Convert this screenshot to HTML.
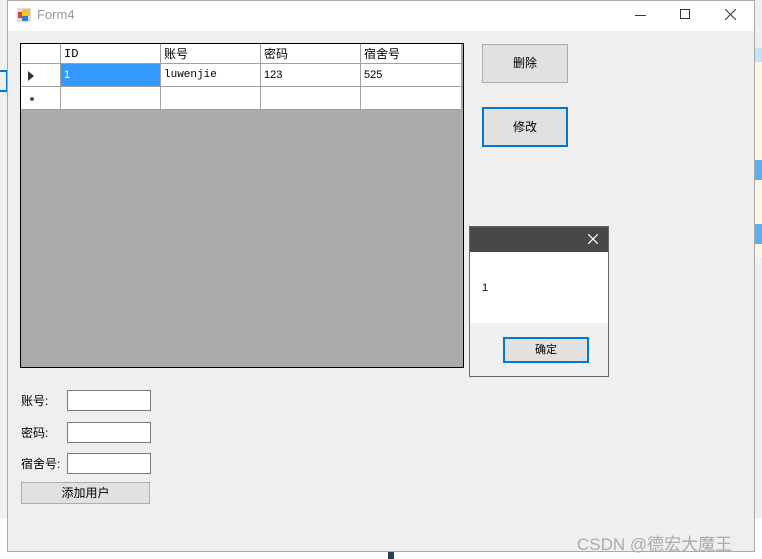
<!DOCTYPE html>
<html><head><meta charset="utf-8"><style>
*{margin:0;padding:0;box-sizing:border-box}
body{width:762px;height:559px;position:relative;overflow:hidden;background:#f0f0f0;font-family:"Liberation Sans","Noto Sans CJK SC",sans-serif;font-size:12px;color:#000}
.a{position:absolute}
.win{left:7px;top:0;width:748px;height:552px;background:#efefef;border:1px solid #aaa}
.title{left:8px;top:1px;width:746px;height:30px;background:#fff}
.cell{position:absolute;border-right:1px solid #a0a0a0;border-bottom:1px solid #a0a0a0;background:#fff;padding-left:3px;line-height:20px;font-size:12px}
.btn{position:absolute;background:#e1e1e1;border:1px solid #adadad;text-align:center;font-size:12px}
.tb{position:absolute;background:#fff;border:1px solid #7a7a7a;width:84px;height:21px;left:67px}
.lbl{position:absolute;left:21px;font-size:12px}
</style></head><body>
<div class="a" style="left:0;top:0;width:8px;height:559px;background:#f0f0f0"></div>
<div class="a" style="left:0;top:70px;width:8px;height:22px;border:2px solid #0078d7;border-left:none"></div>
<div class="a" style="left:755px;top:48px;width:7px;height:14px;background:#bfe3f8"></div>
<div class="a" style="left:755px;top:62px;width:7px;height:195px;background:#fdf8e6"></div>
<div class="a" style="left:755px;top:160px;width:7px;height:20px;background:#5ab0ef"></div>
<div class="a" style="left:755px;top:224px;width:7px;height:20px;background:#5ab0ef"></div>
<div class="a" style="left:0;top:518px;width:762px;height:41px;background:#fff"></div>
<div class="a" style="left:388px;top:550px;width:6px;height:9px;background:#2a3a5a"></div>
<div class="a win"></div>
<div class="a title"></div>
<svg class="a" style="left:17px;top:8px" width="14" height="14"><rect x="0" y="0" width="14" height="14" fill="#ddd"/><rect x="5" y="1" width="8" height="7" fill="#f4c430"/><rect x="1" y="4" width="4" height="6" fill="#d42"/><rect x="5" y="8" width="6" height="5" fill="#3a78d0"/></svg>
<div class="a" style="left:37px;top:7px;color:#999;font-size:13px">Form4</div>
<div class="a" style="left:635px;top:15px;width:11px;height:1px;background:#333"></div>
<div class="a" style="left:680px;top:9px;width:10px;height:10px;border:1px solid #333"></div>
<svg class="a" style="left:725px;top:9px" width="11" height="11"><path d="M0 0L11 11M11 0L0 11" stroke="#333" stroke-width="1"/></svg>
<!-- grid -->
<div class="a" style="left:20px;top:43px;width:444px;height:325px;background:#ababab;border:1px solid #000"></div>
<div class="cell" style="left:21px;top:44px;width:40px;height:20px"></div>
<div class="cell" style="left:61px;top:44px;width:100px;height:20px;font-family:'Liberation Mono',monospace">ID</div>
<div class="cell" style="left:161px;top:44px;width:100px;height:20px">账号</div>
<div class="cell" style="left:261px;top:44px;width:100px;height:20px">密码</div>
<div class="cell" style="left:361px;top:44px;width:101px;height:20px">宿舍号</div>
<div class="cell" style="left:21px;top:64px;width:40px;height:23px"></div>
<svg class="a" style="left:28px;top:71px" width="6" height="10"><path d="M0 0L6 5L0 10Z" fill="#333"/></svg>
<div class="cell" style="left:61px;top:64px;width:100px;height:23px;background:#3399ff;color:#fff;line-height:22px;font-size:11px">1</div>
<div class="cell" style="left:161px;top:64px;width:100px;height:23px;line-height:22px;font-family:'Liberation Mono',monospace;font-size:11px">luwenjie</div>
<div class="cell" style="left:261px;top:64px;width:100px;height:23px;line-height:22px;font-size:11px">123</div>
<div class="cell" style="left:361px;top:64px;width:101px;height:23px;line-height:22px;font-size:11px">525</div>
<div class="cell" style="left:21px;top:87px;width:40px;height:23px"></div>
<div class="a" style="left:30px;top:97px;width:4px;height:4px;background:#555;border-radius:2px"></div>
<div class="cell" style="left:61px;top:87px;width:100px;height:23px"></div>
<div class="cell" style="left:161px;top:87px;width:100px;height:23px"></div>
<div class="cell" style="left:261px;top:87px;width:100px;height:23px"></div>
<div class="cell" style="left:361px;top:87px;width:101px;height:23px"></div>
<!-- buttons -->
<div class="btn" style="left:482px;top:44px;width:86px;height:39px;line-height:37px">删除</div>
<div class="btn" style="left:482px;top:107px;width:86px;height:40px;line-height:36px;border:2px solid #0078d7">修改</div>
<!-- dialog -->
<div class="a" style="left:469px;top:226px;width:140px;height:151px;background:#f0f0f0;border:1px solid #666"></div>
<div class="a" style="left:470px;top:227px;width:138px;height:25px;background:#4a4846"></div>
<svg class="a" style="left:588px;top:234px" width="10" height="10"><path d="M0 0L10 10M10 0L0 10" stroke="#fff" stroke-width="1.2"/></svg>
<div class="a" style="left:470px;top:252px;width:138px;height:71px;background:#fff"></div>
<div class="a" style="left:482px;top:282px;font-size:11px">1</div>
<div class="btn" style="left:503px;top:337px;width:86px;height:26px;line-height:22px;border:2px solid #0078d7;font-size:11px">确定</div>
<!-- form -->
<div class="lbl" style="top:392px">账号:</div><div class="tb" style="top:390px"></div>
<div class="lbl" style="top:424px">密码:</div><div class="tb" style="top:422px"></div>
<div class="lbl" style="top:455px">宿舍号:</div><div class="tb" style="top:453px"></div>
<div class="btn" style="left:21px;top:482px;width:129px;height:22px;line-height:20px">添加用户</div>
<div class="a" style="left:577px;top:530px;color:#aaa;font-size:17px">CSDN @德宏大魔王</div>
</body></html>
